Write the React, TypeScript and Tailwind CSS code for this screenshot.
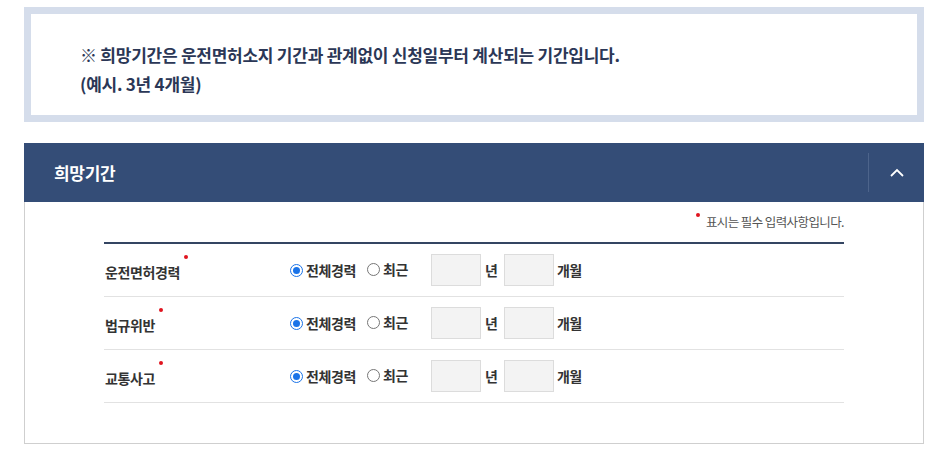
import React from 'react';

const rows = ['운전면허경력', '법규위반', '교통사고'];

function Radio({ checked }: { checked?: boolean }) {
  return checked ? (
    <span className="w-[13px] h-[13px] rounded-full border border-[#1a73e8] flex items-center justify-center bg-white">
      <span className="w-[7px] h-[7px] rounded-full bg-[#1a73e8]" />
    </span>
  ) : (
    <span className="w-[13px] h-[13px] rounded-full border border-[#767676] bg-white" />
  );
}

export default function App() {
  return (
    <div className="w-[938px] h-[461px] bg-white pl-[24px] pr-[14px] pt-[7px] font-['Noto_Sans_CJK_KR','Noto_Sans',sans-serif]">
      {/* Notice */}
      <div className="h-[115px] border-[7px] border-[#d5ddeb] pl-[49px] pt-[26px] text-[17px] leading-[29px] font-bold text-[#2b3756] tracking-[-0.25px]">
        <p>※ 희망기간은 운전면허소지 기간과 관계없이 신청일부터 계산되는 기간입니다.</p>
        <p>(예시. 3년 4개월)</p>
      </div>

      {/* Section header */}
      <div className="mt-[21px] h-[59px] bg-[#344d77] flex items-center">
        <h2 className="flex-1 pl-[30px] text-white text-[17px] font-bold tracking-[-0.3px]">희망기간</h2>
        <div className="w-[56px] h-[39px] border-l border-[#4d648b] flex items-center justify-center">
          <svg width="14" height="9" viewBox="0 0 14 9" fill="none">
            <path d="M1 8L7 2L13 8" stroke="white" strokeWidth="1.8" />
          </svg>
        </div>
      </div>

      {/* Body */}
      <div className="h-[242px] border border-t-0 border-[#cfcfcf] px-[79px] pt-[10px]">
        <p className="text-right text-[12.5px] leading-[20px] text-[#555] tracking-[-0.6px] h-[30px]">
          <span className="relative">
            <span className="absolute -left-[10px] top-[1px] w-[4px] h-[4px] rounded-full bg-[#e0141e]" />
            표시는 필수 입력사항입니다.
          </span>
        </p>
        <div className="border-t-2 border-[#344562]">
          {rows.map((label) => (
            <div key={label} className="h-[53px] border-b border-[#e2e2e2] flex items-center text-[14px] font-bold text-[#333] tracking-[-0.4px]">
              <div className="w-[186px] pl-[1px] pt-[4px]">
                <span className="relative">
                  {label}
                  <span className="absolute -right-[8px] -top-[7px] w-[4px] h-[4px] rounded-full bg-[#e0141e]" />
                </span>
              </div>
              <label className="flex items-center gap-[3px]">
                <Radio checked />
                <span>전체경력</span>
              </label>
              <label className="flex items-center gap-[3px] ml-[11px] -mt-[2px]">
                <Radio />
                <span>최근</span>
              </label>
              <input className="ml-[23px] w-[50px] h-[32px] bg-[#f3f3f3] border border-[#dcdcdc]" />
              <span className="ml-[4px] w-[19px]">년</span>
              <input className="w-[50px] h-[32px] bg-[#f3f3f3] border border-[#dcdcdc]" />
              <span className="ml-[3px]">개월</span>
            </div>
          ))}
        </div>
      </div>
    </div>
  );
}
